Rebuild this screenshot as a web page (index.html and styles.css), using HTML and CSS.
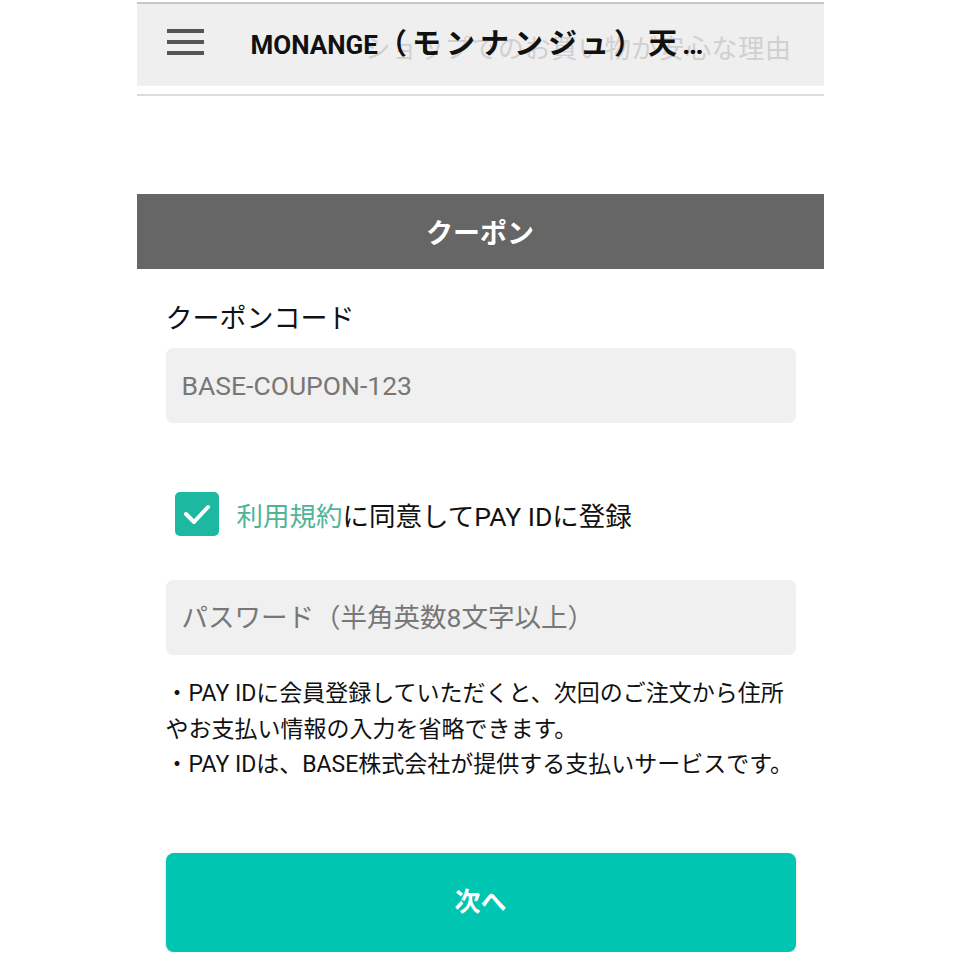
FILE: index.html
```html
<!DOCTYPE html>
<html lang="ja">
<head>
    <meta charset="UTF-8">
    <meta name="viewport" content="width=device-width, initial-scale=1.0">
    <title>クーポン</title>
    <link rel="stylesheet" href="styles.css">
</head>
<body>
    <div class="page">
        <header class="appbar">
            <div class="menu-icon">
                <span></span>
                <span></span>
                <span></span>
            </div>
            <h1 class="title"><span class="brand">MONANGE</span>（モンナンジュ）天…</h1>
            <div class="ghost-title">ショップでのお買い物が安心な理由</div>
        </header>
        <div class="divider"></div>

        <div class="section-head">クーポン</div>

        <form class="coupon-form">
            <label class="field-label" for="coupon">クーポンコード</label>
            <input class="field" type="text" id="coupon" placeholder="BASE-COUPON-123">

            <div class="agree-row">
                <span class="checkbox">
                    <svg width="44" height="44" viewBox="0 0 44 44">
                        <polyline points="11,22 19,30 33,15" fill="none" stroke="#fff" stroke-width="4" stroke-linecap="round" stroke-linejoin="round"/>
                    </svg>
                </span>
                <span class="agree-text"><a href="#">利用規約</a>に同意してPAY IDに登録</span>
            </div>

            <input class="field" type="password" id="password" placeholder="パスワード（半角英数8文字以上）">

            <div class="notes">
                <p>・PAY IDに会員登録していただくと、次回のご注文から住所やお支払い情報の入力を省略できます。</p>
                <p>・PAY IDは、BASE株式会社が提供する支払いサービスです。</p>
            </div>

            <button type="button" class="next-button">次へ</button>
        </form>
    </div>
</body>
</html>
```

FILE: styles.css
```css
body {
    margin: 0;
    padding: 0;
    background-color: #fff;
    font-family: Roboto, "Noto Sans CJK JP", sans-serif;
    color: #111;
}

.page {
    width: 687px;
    margin: 0 auto;
}

.appbar {
    position: relative;
    margin-top: 2px;
    border-top: 2px solid #c6c6c6;
    background-color: #efefef;
    height: 84px;
    display: flex;
    align-items: center;
    padding-left: 30px;
    box-sizing: border-box;
    overflow: hidden;
}

.menu-icon {
    width: 37px;
    display: flex;
    flex-direction: column;
    gap: 7px;
    margin-top: -6px;
}

.menu-icon span {
    display: block;
    height: 4px;
    background-color: #555;
}

.title {
    position: relative;
    z-index: 1;
    margin: -8px 0 0 47px;
    font-size: 29px;
    font-weight: bold;
    letter-spacing: 5px;
    white-space: nowrap;
    color: #111;
}

.title .brand {
    font-size: 26px;
    letter-spacing: 0;
}

.ghost-title {
    position: absolute;
    left: 228px;
    top: 24px;
    font-size: 26px;
    color: #d0d0d0;
    white-space: nowrap;
    letter-spacing: 0.7px;
}

.divider {
    margin-top: 8px;
    height: 2px;
    background-color: #dcdcdc;
}

.section-head {
    margin-top: 98px;
    height: 75px;
    background-color: #666;
    color: #fff;
    font-size: 27px;
    font-weight: bold;
    display: flex;
    align-items: center;
    justify-content: center;
}

.coupon-form {
    padding: 0 28px 0 29px;
    display: flex;
    flex-direction: column;
}

.field-label {
    margin-top: 32px;
    font-size: 27px;
    line-height: 36px;
    color: #111;
}

.field {
    margin-top: 11px;
    height: 75px;
    border: none;
    border-radius: 7px;
    background-color: #f0f0f0;
    padding: 0 16px;
    font-family: Roboto, "Noto Sans CJK JP", sans-serif;
    font-size: 26.5px;
    color: #333;
    box-sizing: border-box;
    outline: none;
}

.field::placeholder {
    color: #777;
}

.agree-row {
    margin: 69px 0 33px 9px;
    display: flex;
    align-items: center;
    gap: 18px;
}

.checkbox {
    width: 44px;
    height: 44px;
    border-radius: 5px;
    background-color: #1cb9a0;
    display: block;
}

.checkbox svg {
    display: block;
}

.agree-text {
    font-size: 26.5px;
    color: #111;
}

.agree-text a {
    color: #4fb497;
    text-decoration: none;
}

.notes {
    margin-top: 21px;
    font-size: 23px;
    line-height: 35.5px;
    color: #111;
}

.notes p {
    margin: 0;
}

.next-button {
    margin-top: 70px;
    height: 99px;
    padding-bottom: 6px;
    border: none;
    border-radius: 8px;
    background-color: #00c5b0;
    color: #fff;
    font-family: Roboto, "Noto Sans CJK JP", sans-serif;
    font-size: 26px;
    font-weight: bold;
    box-shadow: 0 1px 3px rgba(0,0,0,0.2);
    cursor: pointer;
}
```
